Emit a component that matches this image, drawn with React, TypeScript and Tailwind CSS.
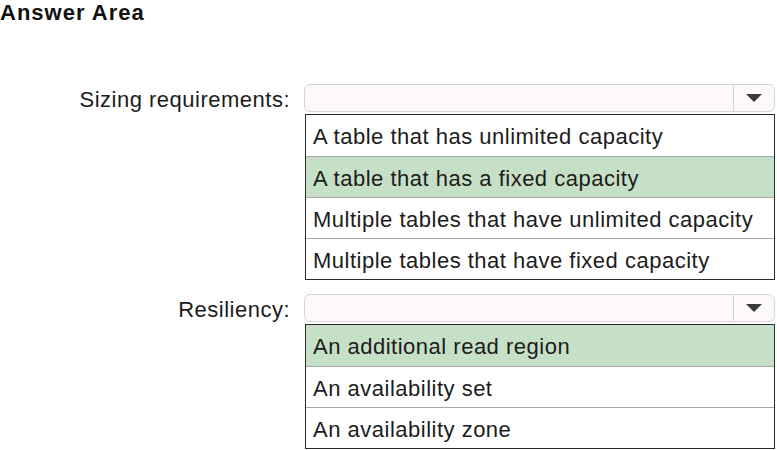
const questions = [
  {
    label: "Sizing requirements:",
    options: [
      { text: "A table that has unlimited capacity", selected: false },
      { text: "A table that has a fixed capacity", selected: true },
      { text: "Multiple tables that have unlimited capacity", selected: false },
      { text: "Multiple tables that have fixed capacity", selected: false },
    ],
  },
  {
    label: "Resiliency:",
    options: [
      { text: "An additional read region", selected: true },
      { text: "An availability set", selected: false },
      { text: "An availability zone", selected: false },
    ],
  },
];

function Dropdown() {
  return (
    <div className="flex h-[28px] w-[471px] items-stretch rounded-[6px] border border-[#d6d6d6] bg-[#fdf9f9]">
      <div className="flex-1" />
      <div className="flex w-[41px] items-center justify-center border-l border-[#d6d6d6]">
        <svg width="18" height="10" viewBox="0 0 18 10">
          <path d="M1 1 L17 1 L9 9 Z" fill="#3a3a3a" />
        </svg>
      </div>
    </div>
  );
}

export default function App() {
  return (
    <div className="h-[450px] w-[777px] overflow-hidden bg-white text-[#1c1c1c] font-['Liberation_Sans',Arial,sans-serif]">
      <h1 className="text-[22px] font-bold leading-[26px] tracking-[1px] text-[#111]">Answer Area</h1>

      <div className="mt-[58px] flex flex-col gap-[14px]">
        {questions.map((q) => (
          <div key={q.label} className="grid grid-cols-[290px_1fr] gap-x-[14px]">
            <div className="flex h-[28px] items-center justify-end pt-[2px] text-[22px] tracking-[0.5px]">
              {q.label}
            </div>
            <div className="flex flex-col gap-[2px]">
              <Dropdown />
              <div className="ml-[1px] w-[470px] border border-[#2a2a2a]">
                {q.options.map((o, i) => (
                  <div
                    key={o.text}
                    className={
                      "flex h-[41px] items-center pl-[7px] pt-[2px] text-[22px] tracking-[0.5px] " +
                      (i > 0 ? "border-t border-[#a8a8a8] " : "") +
                      (o.selected ? "bg-[#c5e0c6]" : "bg-white")
                    }
                  >
                    {o.text}
                  </div>
                ))}
              </div>
            </div>
          </div>
        ))}
      </div>
    </div>
  );
}
